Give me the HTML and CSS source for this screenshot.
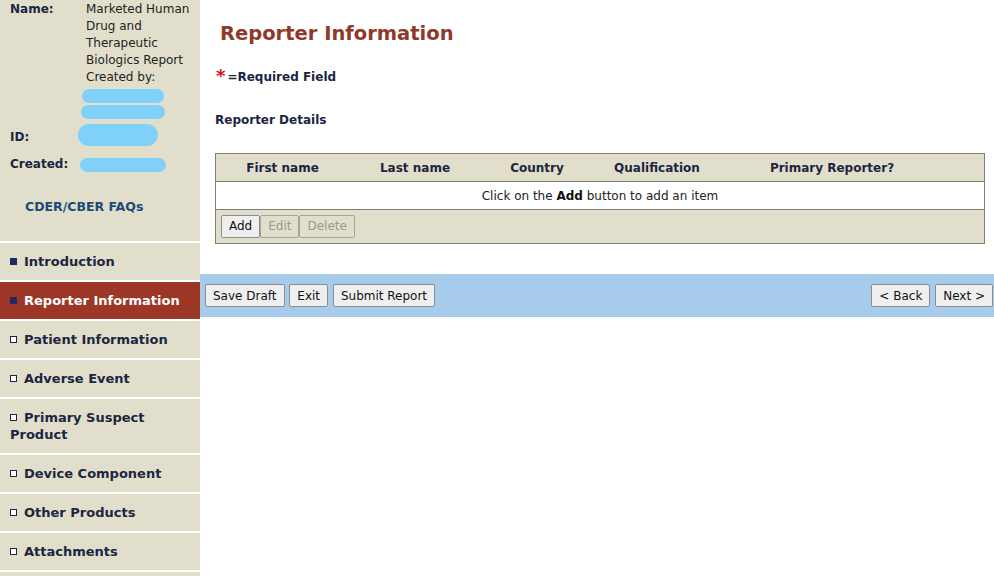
FILE: index.html
```html
<!DOCTYPE html>
<html lang="en">
<head>
    <meta charset="UTF-8">
    <title>Reporter Information</title>
    <link rel="stylesheet" href="styles.css">
</head>
<body>
    <div id="side-ctn">
        <div id="info-ctn">
            <div class="info-row">
                <div class="info-label">Name:</div>
                <div class="info-value">Marketed Human Drug and Therapeutic Biologics Report Created by:
                    <span class="blob blob-a"></span>
                    <span class="blob blob-b"></span>
                </div>
            </div>
            <div class="info-row id-row">
                <div class="info-label">ID:</div>
                <div class="info-value"><span class="blob blob-c"></span></div>
            </div>
            <div class="info-row created-row">
                <div class="info-label">Created:</div>
                <div class="info-value"><span class="blob blob-d"></span></div>
            </div>
        </div>
        <a class="faq-link" href="#">CDER/CBER FAQs</a>
        <ul id="nav">
            <li class="nav-item done"><span class="mark"></span>Introduction</li>
            <li class="nav-item done active"><span class="mark"></span>Reporter Information</li>
            <li class="nav-item"><span class="mark"></span>Patient Information</li>
            <li class="nav-item"><span class="mark"></span>Adverse Event</li>
            <li class="nav-item"><span class="mark"></span>Primary Suspect Product</li>
            <li class="nav-item"><span class="mark"></span>Device Component</li>
            <li class="nav-item"><span class="mark"></span>Other Products</li>
            <li class="nav-item"><span class="mark"></span>Attachments</li>
            <li class="nav-item"></li>
        </ul>
    </div>
    <div id="main-ctn">
        <h1 id="page-title">Reporter Information</h1>
        <div id="required"><span class="star">*</span>=Required Field</div>
        <h3 id="section-title">Reporter Details</h3>
        <table id="grid">
            <tr class="grid-head">
                <th class="c1">First name</th>
                <th class="c2">Last name</th>
                <th class="c3">Country</th>
                <th class="c4">Qualification</th>
                <th class="c5">Primary Reporter?</th>
                <th></th>
            </tr>
            <tr class="grid-body">
                <td colspan="6">Click on the <b>Add</b> button to add an item</td>
            </tr>
            <tr class="grid-foot">
                <td colspan="6">
                    <div class="btn-group">
                        <button class="btn">Add</button><button class="btn" disabled>Edit</button><button class="btn" disabled>Delete</button>
                    </div>
                </td>
            </tr>
        </table>
        <div id="action-bar">
            <div class="bar-left">
                <button class="btn">Save Draft</button>
                <button class="btn">Exit</button>
                <button class="btn">Submit Report</button>
            </div>
            <div class="bar-right">
                <button class="btn">&lt; Back</button>
                <button class="btn">Next &gt;</button>
            </div>
        </div>
    </div>
</body>
</html>
```

FILE: styles.css
```css
html, body {
    height: 100%;
}
body {
    margin: 0;
    display: flex;
    overflow: hidden;
    font-family: "DejaVu Sans", Verdana, sans-serif;
    font-size: 12px;
    color: #1c2541;
    background-color: white;
}
#side-ctn {
    width: 200px;
    flex-shrink: 0;
    overflow: hidden;
    background-color: #e1dfcb;
}
#info-ctn {
    padding: 1px 0 0 10px;
    line-height: 17px;
}
.info-row {
    display: flex;
}
.info-label {
    width: 76px;
    flex-shrink: 0;
    font-weight: bold;
    color: #1c2541;
}
.info-value {
    color: #222;
    flex: 1;
}
.blob {
    display: block;
    background-color: #7fd1fa;
    border-radius: 8px;
}
.blob-a {
    width: 82px;
    height: 14px;
    margin: 3px 0 0 -4px;
}
.blob-b {
    width: 84px;
    height: 14px;
    margin: 2px 0 0 -5px;
}
.id-row {
    margin-top: 10px;
}
.blob-c {
    width: 80px;
    height: 22px;
    margin: -5px 0 0 -8px;
    border-radius: 11px;
}
.created-row {
    margin-top: 10px;
}
.blob-d {
    width: 86px;
    height: 14px;
    margin: 2px 0 0 -6px;
}
.faq-link {
    display: block;
    margin: 25px 0 0 25px;
    font-size: 12.5px;
    font-weight: bold;
    color: #1d4b78;
    text-decoration: none;
    line-height: 17px;
}
#nav {
    list-style: none;
    margin: 26px 0 0 0;
    padding: 0;
}
.nav-item {
    border-top: 2px solid white;
    padding: 10px 10px;
    line-height: 17px;
    font-size: 13px;
    font-weight: bold;
    color: #1c2541;
    min-height: 17px;
}
.nav-item.active {
    background-color: #9c3627;
    color: white;
}
.mark {
    display: inline-block;
    width: 5px;
    height: 5px;
    border: 1px solid #1c2541;
    background-color: white;
    margin-right: 7px;
    vertical-align: 1px;
}
.done .mark {
    background-color: #1c2a5e;
    border-color: #1c2a5e;
}
#main-ctn {
    flex: 1;
}
#page-title {
    margin: 22px 0 0 20px;
    font-size: 19.5px;
    line-height: 24px;
    color: #8e3a2b;
}
#required {
    margin: 21px 0 0 16px;
    font-weight: bold;
    line-height: 17px;
}
.star {
    color: #e0141e;
    font-size: 18px;
    margin-right: 2px;
    vertical-align: -1px;
}
#section-title {
    margin: 26px 0 0 15px;
    font-size: 12px;
    line-height: 17px;
}
#grid {
    margin: 24px 0 0 15px;
    width: 770px;
    border-collapse: collapse;
    border: 1px solid #7f7e76;
}
.grid-head {
    background-color: #e1dfcb;
}
.grid-head th {
    height: 27px;
    padding: 0;
    font-size: 12px;
    color: #1c2541;
}
.c1 { width: 133px; }
.c2 { width: 132px; }
.c3 { width: 112px; }
.c4 { width: 128px; }
.c5 { width: 222px; }
.grid-body td {
    border-top: 1px solid #7f7e76;
    border-bottom: 1px solid #7f7e76;
    height: 27px;
    padding: 0;
    text-align: center;
    color: #222;
    background-color: white;
}
.grid-body b {
    color: #111;
}
.grid-foot td {
    background-color: #e1dfcb;
    padding: 4px 5px 5px 5px;
    height: 24px;
}
.btn-group {
    display: flex;
}
.btn {
    font-family: "DejaVu Sans", Verdana, sans-serif;
    font-size: 12px;
    height: 23px;
    padding: 0 7px;
    border: 1px solid #8d8d8d;
    border-radius: 2px;
    background-color: #efefef;
    color: #111;
}
.btn:disabled {
    background-color: #e1dfcb;
    color: #999;
    border-color: #a5a49c;
}
#action-bar {
    margin-top: 30px;
    background-color: #a7cbea;
    height: 43px;
    display: flex;
    justify-content: space-between;
    align-items: center;
    padding: 0 1px 0 5px;
}
.bar-left .btn {
    margin-right: 1px;
}
.bar-right .btn {
    margin-left: 1px;
}
```
